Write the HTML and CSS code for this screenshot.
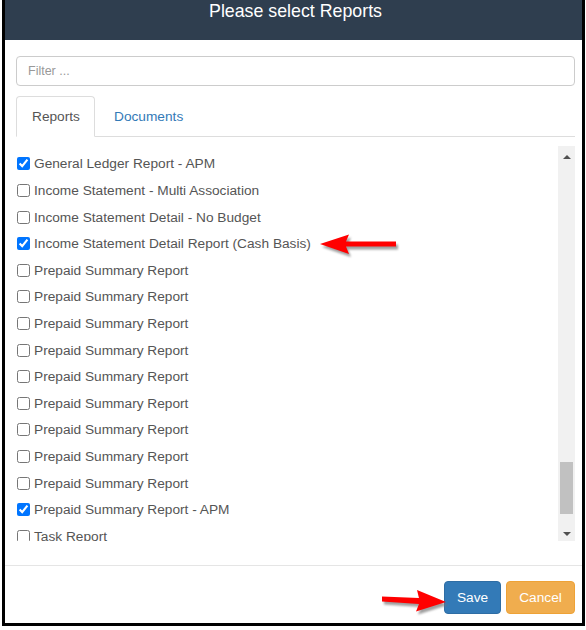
FILE: index.html
```html
<!DOCTYPE html>
<html>
<head>
<meta charset="utf-8">
<link rel="stylesheet" href="styles.css">
</head>
<body>
<div class="modal">
  <div class="modal-header"><h4 class="title">Please select Reports</h4></div>
  <div class="modal-body">
    <input class="filter" type="text" placeholder="Filter ...">
    <ul class="tabs">
      <li class="tab active">Reports</li>
      <li class="tab link">Documents</li>
    </ul>
    <div class="list-wrap">
      <div class="list">
        <label class="item"><input type="checkbox" checked><span>General Ledger Report - APM</span></label>
        <label class="item"><input type="checkbox"><span>Income Statement - Multi Association</span></label>
        <label class="item"><input type="checkbox"><span>Income Statement Detail - No Budget</span></label>
        <label class="item"><input type="checkbox" checked><span>Income Statement Detail Report (Cash Basis)</span></label>
        <label class="item"><input type="checkbox"><span>Prepaid Summary Report</span></label>
        <label class="item"><input type="checkbox"><span>Prepaid Summary Report</span></label>
        <label class="item"><input type="checkbox"><span>Prepaid Summary Report</span></label>
        <label class="item"><input type="checkbox"><span>Prepaid Summary Report</span></label>
        <label class="item"><input type="checkbox"><span>Prepaid Summary Report</span></label>
        <label class="item"><input type="checkbox"><span>Prepaid Summary Report</span></label>
        <label class="item"><input type="checkbox"><span>Prepaid Summary Report</span></label>
        <label class="item"><input type="checkbox"><span>Prepaid Summary Report</span></label>
        <label class="item"><input type="checkbox"><span>Prepaid Summary Report</span></label>
        <label class="item"><input type="checkbox" checked><span>Prepaid Summary Report - APM</span></label>
        <label class="item"><input type="checkbox"><span>Task Report</span></label>
      </div>
      <div class="scrollbar">
        <div class="sb-btn"><span class="tri-up"></span></div>
        <div class="sb-track"><div class="sb-thumb"></div></div>
        <div class="sb-btn"><span class="tri-down"></span></div>
      </div>
    </div>
  </div>
  <div class="modal-footer">
    <button class="btn save">Save</button>
    <button class="btn cancel">Cancel</button>
  </div>
</div>
<svg class="arrows" width="586" height="630" viewBox="0 0 586 630">
  <defs>
    <filter id="blur" x="-20%" y="-50%" width="140%" height="200%"><feGaussianBlur stdDeviation="1.2"/></filter>
  </defs>
  <g transform="translate(2,3)" filter="url(#blur)" fill="#777" opacity="0.7">
    <polygon points="320,244 349,234.5 346,241.5 396,241.5 396,246.5 346,246.5 349,254"/>
    <polygon points="382,596.5 419,598 417,590 446,602 416,611.5 419,604 382,601.5"/>
  </g>
  <g fill="#ff0000">
    <polygon points="320,244 349,234.5 346,241.5 396,241.5 396,246.5 346,246.5 349,254"/>
    <polygon points="382,596.5 419,598 417,590 446,602 416,611.5 419,604 382,601.5"/>
  </g>
</svg>
</body>
</html>
```
FILE: styles.css
```css
* { box-sizing: border-box; }
html, body { margin: 0; padding: 0; background: #fff; }
body {
  font-family: "Liberation Sans", Arial, sans-serif;
  font-size: 13.7px;
  color: #555;
  width: 586px;
  height: 630px;
  overflow: hidden;
  position: relative;
}
.modal {
  margin-left: 2px;
  width: 583px;
  height: 626px;
  border: 3px solid #000;
  border-top: 0;
  display: flex;
  flex-direction: column;
}
.modal-header {
  height: 40px;
  background: #2f3e4f;
  text-align: center;
  padding-top: 2px;
}
.title {
  margin: 0;
  padding-left: 4px;
  color: #fff;
  font-weight: normal;
  font-size: 17.8px;
  line-height: 18px;
}
.modal-body {
  padding: 16px 7px 24px 11px;
}
.filter {
  display: block;
  width: 100%;
  height: 30px;
  border: 1px solid #ccc;
  border-radius: 4px;
  padding: 0 11px;
  font-family: "Liberation Sans", Arial, sans-serif;
  font-size: 12.5px;
  color: #555;
  outline: none;
}
.filter::placeholder { color: #999; }
.tabs {
  list-style: none;
  margin: 10px 0 0 0;
  padding: 0;
  display: flex;
  border-bottom: 1px solid #ddd;
  height: 41px;
}
.tab {
  height: 41px;
  padding: 0 15px;
  line-height: 39px;
  font-size: 13.7px;
  margin-bottom: -1px;
  border: 1px solid transparent;
  border-radius: 4px 4px 0 0;
}
.tab.active {
  width: 79px;
  color: #555;
  background: #fff;
  border-color: #ddd;
  border-bottom-color: #fff;
}
.tab.link {
  margin-left: 3px;
  color: #337ab7;
}
.list-wrap {
  margin-top: 9px;
  height: 395px;
  display: flex;
}
.list {
  flex: 1;
  overflow: hidden;
  padding-top: 4.7px;
  padding-left: 1px;
}
.item {
  display: flex;
  align-items: center;
  height: 26.6px;
  gap: 4px;
  white-space: nowrap;
}
.item input {
  margin: 0;
  width: 13px;
  height: 13px;
  flex: none;
}
.scrollbar {
  width: 17px;
  background: #f1f1f1;
  display: flex;
  flex-direction: column;
}
.sb-btn {
  height: 17px;
  display: flex;
  align-items: center;
  justify-content: center;
}
.sb-track {
  flex: 1;
  position: relative;
  padding: 299px 2px 10px 2px;
}
.sb-thumb {
  height: 52px;
  background: #c1c1c1;
}
.tri-up, .tri-down {
  width: 0;
  height: 0;
  border-left: 4px solid transparent;
  border-right: 4px solid transparent;
}
.tri-up { border-bottom: 4px solid #505050; margin-top: 4px; }
.tri-down { border-top: 4px solid #505050; margin-top: 2px; }
.modal-footer {
  border-top: 1px solid #e5e5e5;
  padding: 15px 7px 9px 0;
  display: flex;
  justify-content: flex-end;
  gap: 5px;
}
.btn {
  height: 33px;
  border-radius: 4px;
  color: #fff;
  font-family: "Liberation Sans", Arial, sans-serif;
  font-size: 13.7px;
  padding: 0;
  cursor: pointer;
}
.save { width: 57px; background: #337ab7; border: 1px solid #2e6da4; }
.cancel { width: 69px; background: #f0ad4e; border: 1px solid #eea236; }
.arrows {
  position: absolute;
  left: 0;
  top: 0;
  pointer-events: none;
}
```
